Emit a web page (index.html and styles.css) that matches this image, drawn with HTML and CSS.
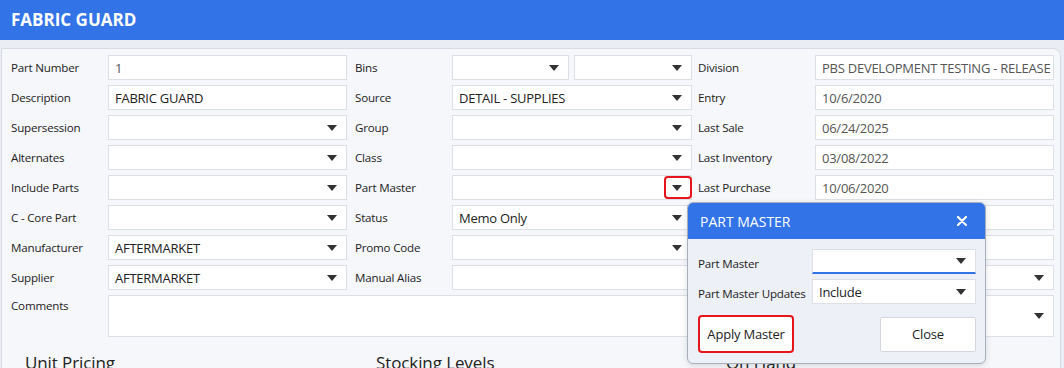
FILE: index.html
```html
<!DOCTYPE html>
<html lang="en">
<head>
    <meta charset="UTF-8">
    <title>Fabric Guard</title>
    <link rel="stylesheet" href="styles.css">
</head>
<body>
    <div class="page-header">FABRIC GUARD</div>

    <div class="page-body">
        <div class="panel">
            <div class="form-grid">
                <!-- row 1 -->
                <label class="lbl">Part Number</label>
                <div class="field readonly">1</div>
                <label class="lbl col2">Bins</label>
                <div class="field-pair">
                    <div class="field select"><span class="caret"></span></div>
                    <div class="field select"><span class="caret"></span></div>
                </div>
                <label class="lbl col3">Division</label>
                <div class="field readonly">PBS DEVELOPMENT TESTING - RELEASE 2</div>

                <!-- row 2 -->
                <label class="lbl">Description</label>
                <div class="field">FABRIC GUARD</div>
                <label class="lbl col2">Source</label>
                <div class="field select">DETAIL - SUPPLIES<span class="caret"></span></div>
                <label class="lbl col3">Entry</label>
                <div class="field readonly">10/6/2020</div>

                <!-- row 3 -->
                <label class="lbl">Supersession</label>
                <div class="field select"><span class="caret"></span></div>
                <label class="lbl col2">Group</label>
                <div class="field select"><span class="caret"></span></div>
                <label class="lbl col3">Last Sale</label>
                <div class="field readonly">06/24/2025</div>

                <!-- row 4 -->
                <label class="lbl">Alternates</label>
                <div class="field select"><span class="caret"></span></div>
                <label class="lbl col2">Class</label>
                <div class="field select"><span class="caret"></span></div>
                <label class="lbl col3">Last Inventory</label>
                <div class="field readonly">03/08/2022</div>

                <!-- row 5 -->
                <label class="lbl">Include Parts</label>
                <div class="field select"><span class="caret"></span></div>
                <label class="lbl col2">Part Master</label>
                <div class="field select has-marker"><span class="caret"></span><span class="marker"></span></div>
                <label class="lbl col3">Last Purchase</label>
                <div class="field readonly">10/06/2020</div>

                <!-- row 6 (third column sits under the dialog) -->
                <label class="lbl">C - Core Part</label>
                <div class="field select"><span class="caret"></span></div>
                <label class="lbl col2">Status</label>
                <div class="field select">Memo Only<span class="caret"></span></div>
                <label class="lbl col3"></label>
                <div class="field readonly"></div>

                <!-- row 7 -->
                <label class="lbl">Manufacturer</label>
                <div class="field select">AFTERMARKET<span class="caret"></span></div>
                <label class="lbl col2">Promo Code</label>
                <div class="field select"><span class="caret"></span></div>
                <label class="lbl col3"></label>
                <div class="field readonly"></div>

                <!-- row 8 -->
                <label class="lbl">Supplier</label>
                <div class="field select">AFTERMARKET<span class="caret"></span></div>
                <label class="lbl col2">Manual Alias</label>
                <div class="field"></div>
                <label class="lbl col3"></label>
                <div class="field select"><span class="caret"></span></div>

                <!-- row 9 -->
                <label class="lbl top">Comments</label>
                <div class="field tall wide"></div>
                <label class="lbl col3 top"></label>
                <div class="field select tall"><span class="caret"></span></div>
            </div>

            <div class="sections">
                <h2>Unit Pricing</h2>
                <h2>Stocking Levels</h2>
                <h2>On Hand</h2>
            </div>
        </div>
    </div>

    <div class="dialog">
        <div class="dialog-head">
            <span>PART MASTER</span>
            <svg class="close" width="10" height="10" viewBox="0 0 10 10">
                <path d="M1 1 L9 9 M9 1 L1 9" stroke="#fff" stroke-width="2.2" stroke-linecap="round"/>
            </svg>
        </div>
        <div class="dialog-body">
            <div class="dialog-row">
                <label>Part Master</label>
                <div class="field select focused"><span class="caret"></span></div>
            </div>
            <div class="dialog-row">
                <label>Part Master Updates</label>
                <div class="field select">Include<span class="caret"></span></div>
            </div>
            <div class="dialog-buttons">
                <button class="btn btn-marked">Apply Master</button>
                <button class="btn">Close</button>
            </div>
        </div>
    </div>
</body>
</html>
```

FILE: styles.css
```css
body {
    margin: 0;
    font-family: "Open Sans", "Noto Sans", sans-serif;
    font-size: 11.6px;
    letter-spacing: -0.2px;
    color: #222;
    background: #ebedf4;
    overflow: hidden;
}
.page-header {
    height: 40px;
    line-height: 40px;
    padding-left: 11px;
    background-color: #3273e8;
    color: #fff;
    font-size: 17px;
    font-weight: bold;
    letter-spacing: 0;
}
.page-body {
    padding: 8px 3px 0 1px;
}
.panel {
    background-color: #f6f7fb;
    border: 1px solid #d8dbe3;
    border-radius: 0 8px 0 0;
    padding: 6px 6px 0 9px;
    height: 400px;
}
.form-grid {
    display: grid;
    grid-template-columns: 97px 239px 105px 240px 123px 239px;
    grid-template-rows: repeat(8, 25px) 42px;
    row-gap: 5px;
}
.lbl {
    display: flex;
    align-items: center;
    padding-bottom: 1px;
    white-space: nowrap;
}
.lbl.col2 {
    padding-left: 8px;
}
.lbl.col3 {
    padding-left: 6px;
}
.lbl.top {
    align-items: flex-start;
    padding-top: 3px;
}
.field {
    box-sizing: border-box;
    height: 25px;
    display: flex;
    align-items: center;
    padding: 0 9px 0 6px;
    background-color: #fff;
    border: 1px solid #dcdfe6;
    font-size: 13px;
    letter-spacing: -0.25px;
    color: #222;
    white-space: nowrap;
    overflow: hidden;
}
.field.readonly {
    color: #555;
}
.field.tall {
    height: 42px;
}
.field.wide {
    grid-column: span 3;
}
.field-pair {
    display: grid;
    grid-template-columns: 117px 118px;
    column-gap: 5px;
}
.caret {
    margin-left: auto;
    width: 0;
    height: 0;
    border-left: 5px solid transparent;
    border-right: 5px solid transparent;
    border-top: 6px solid #333;
    flex-shrink: 0;
}
.has-marker {
    position: relative;
    overflow: visible;
}
.marker {
    position: absolute;
    right: -1px;
    top: 0;
    width: 28px;
    height: 23px;
    box-sizing: border-box;
    border: 2px solid #e8141b;
    border-radius: 4px;
}
.sections {
    display: grid;
    grid-template-columns: 351px 350px 300px;
    padding: 14px 0 0 14px;
}
.sections h2 {
    margin: 0;
    font-size: 17px;
    font-weight: 500;
    letter-spacing: -0.1px;
    color: #222;
}
.dialog {
    position: absolute;
    left: 687px;
    top: 202px;
    width: 299px;
    height: 162px;
    box-sizing: border-box;
    border: 1px solid #a9aebb;
    border-radius: 6px;
    background-color: #eef0f7;
    overflow: hidden;
    box-shadow: 0 2px 6px rgba(0, 0, 0, 0.12);
}
.dialog-head {
    height: 36px;
    display: flex;
    align-items: center;
    padding: 0 18px 0 12px;
    background-color: #3273e8;
    color: #fff;
    font-size: 14px;
    letter-spacing: 0;
}
.dialog-head .close {
    margin-left: auto;
}
.dialog-body {
    padding: 10px 9px 0 10px;
}
.dialog-row {
    display: flex;
    align-items: center;
    height: 25px;
    margin-bottom: 5px;
}
.dialog-row label {
    width: 114px;
    padding-top: 4px;
    white-space: nowrap;
}
.dialog-row .field {
    width: 164px;
}
.field.focused {
    border-bottom: 2px solid #3273e8;
}
.dialog-buttons {
    display: flex;
    justify-content: space-between;
    align-items: center;
    margin-top: 11px;
}
.btn {
    box-sizing: border-box;
    width: 96px;
    height: 35px;
    background-color: #fff;
    border: 1px solid #d3d6de;
    border-radius: 2px;
    font-family: inherit;
    font-size: 13px;
    letter-spacing: -0.2px;
    color: #222;
}
.btn-marked {
    height: 38px;
    border: 2px solid #e8141b;
    border-radius: 4px;
}
```
